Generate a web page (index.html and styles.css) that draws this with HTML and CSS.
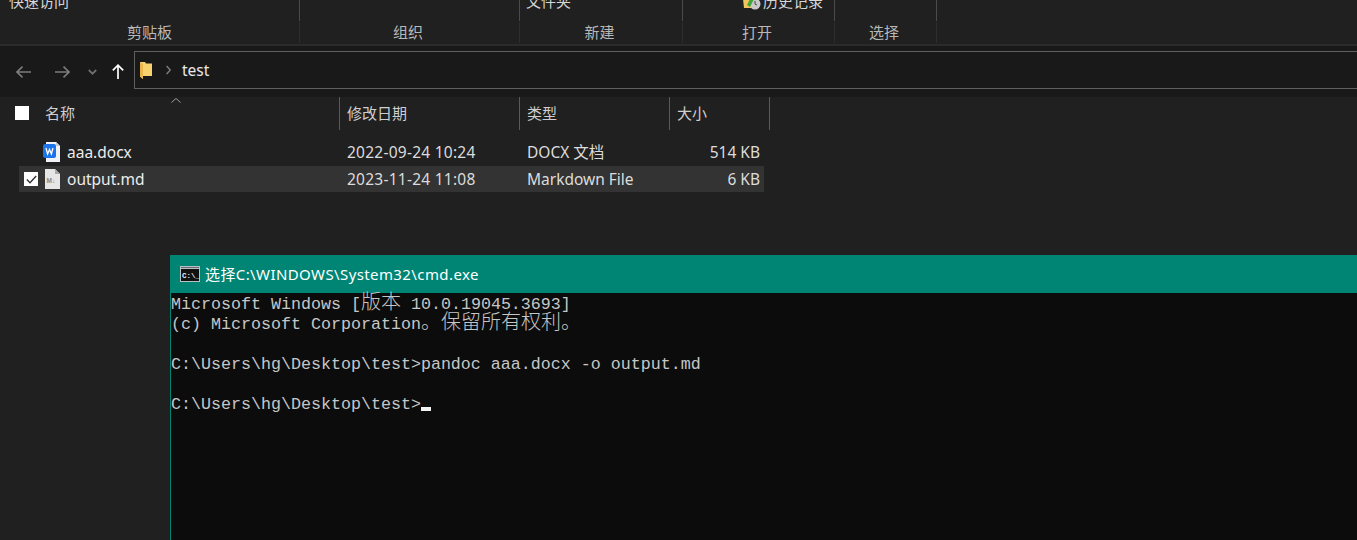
FILE: index.html
```html
<!DOCTYPE html>
<html lang="zh-CN">
<head>
<meta charset="utf-8">
<title>test</title>
<link rel="stylesheet" href="styles.css">
</head>
<body>
<div class="desktop">
  <div class="explorer">
    <section class="ribbon">
      <div class="ribbon-top">
        <div class="cell c1"><span class="clip-text first">快速访问</span></div>
        <div class="cell c2"></div>
        <div class="cell c3"><span class="clip-text third">文件夹</span></div>
        <div class="cell c4">
          <span class="clip-text hist">
            <svg class="hist-icon" width="18" height="11" viewBox="0 0 18 11"><path d="M0 0h8v9H1z" fill="#f2c55c"/><circle cx="12" cy="5" r="5.5" fill="#c9c9c9"/><path d="M4 6l3-6h4L7 8z" fill="#3fa63a"/><path d="M12 2v3l2 1" stroke="#444" fill="none"/></svg>历史记录</span>
        </div>
        <div class="cell c5"></div>
      </div>
      <div class="ribbon-labels">
        <div class="cell c1">剪贴板</div>
        <div class="cell c2">组织</div>
        <div class="cell c3">新建</div>
        <div class="cell c4">打开</div>
        <div class="cell c5">选择</div>
      </div>
    </section>

    <nav class="navbar">
      <svg class="nav-btn back" width="15" height="12" viewBox="0 0 15 12"><path d="M1 6H15M6.500 .7L1 6l5.500 5.300" fill="none" stroke="#7c7c7c" stroke-width="1.6"/></svg>
      <svg class="nav-btn forward" width="15" height="12" viewBox="0 0 15 12"><path d="M14 6H0M8.500 .7L14 6l-5.500 5.300" fill="none" stroke="#7c7c7c" stroke-width="1.6"/></svg>
      <svg class="nav-btn drop" width="9" height="6" viewBox="0 0 9 6"><path d="M.8 1l3.700 3.700L8.200 1" fill="none" stroke="#6e6e6e" stroke-width="1.8"/></svg>
      <svg class="nav-btn up" width="12" height="15" viewBox="0 0 12 15"><path d="M6 15V1.200M.8 6.300L6 1.200l5.200 5.100" fill="none" stroke="#fff" stroke-width="1.7"/></svg>
      <div class="address">
        <svg class="folder" width="12" height="17" viewBox="0 0 12 17"><path d="M0 0h5l1 1.500h6V14H3v3L0 14.500z" fill="#f8d26f"/><path d="M0 0l3 2V17L0 14.500z" fill="#e8b64a"/></svg>
        <svg class="crumb" width="5" height="10" viewBox="0 0 5 10"><path d="M.6 1l3.700 4-3.700 4" fill="none" stroke="#7a7a7a" stroke-width="1.500"/></svg>
        <span class="path">test</span>
      </div>
    </nav>

    <main class="files">
      <div class="file-head">
        <div class="head-col name-col">
          <span class="check empty"></span>
          <span>名称</span>
          <svg class="sort" width="10" height="5" viewBox="0 0 10 5"><path d="M.5 4.500L5 .5l4.500 4" fill="none" stroke="#9a9a9a"/></svg>
        </div>
        <div class="head-col date-col">修改日期</div>
        <div class="head-col type-col">类型</div>
        <div class="head-col size-col">大小</div>
      </div>

      <div class="rows">
        <div class="row">
          <div class="file-name">
            <span class="row-check"></span>
            <svg class="file-icon" width="18" height="20" viewBox="0 0 18 20"><path d="M3 0h10l4 4v16H3z" fill="#f1f3f6"/><path d="M13 0l4 4h-4z" fill="#c4cbd6"/><rect x="0" y="2" width="13" height="14" rx="2" fill="#1c74e8"/><path d="M3 6l1.600 6 1.900-4.500L8.400 12 10 6" fill="none" stroke="#fff" stroke-width="1.300"/></svg>
            <span>aaa.docx</span>
          </div>
          <div class="date">2022-09-24 10:24</div>
          <div>DOCX 文档</div>
          <div class="size">514 KB</div>
        </div>
        <div class="row selected">
          <div class="file-name">
            <span class="check ticked">
              <svg width="11" height="9" viewBox="0 0 11 9"><path d="M.8 4.500l3.200 3.300L10.200 1" fill="none" stroke="#333" stroke-width="1.400"/></svg>
            </span>
            <svg class="file-icon md" width="15" height="20" viewBox="0 0 15 20"><path d="M0 0h10l5 5v15H0z" fill="#e6e6e6"/><path d="M10 0l5 5h-5z" fill="#a9a9a9"/><text class="md-mark" x="1.500" y="14">M↓</text></svg>
            <span>output.md</span>
          </div>
          <div class="date">2023-11-24 11:08</div>
          <div>Markdown File</div>
          <div class="size">6 KB</div>
        </div>
      </div>
    </main>
  </div>

  <section class="terminal">
    <header class="term-title">
      <svg class="term-icon" width="20" height="16" viewBox="0 0 20 16"><rect width="20" height="16" fill="#b9c2c0"/><rect x="1" y="3" width="18" height="12" fill="#111"/><rect x="1" y="1" width="18" height="1" fill="#667"/><text class="term-icon-text" x="2" y="12">C:\_</text></svg>
      <span class="term-name">选择C:\WINDOWS\System32\cmd.exe</span>
    </header>
    <div class="term-body">
      <div class="line">Microsoft Windows [<span class="cjk">版本</span> 10.0.19045.3693]</div>
      <div class="line">(c) Microsoft Corporation<span class="cjk">。保留所有权利。</span></div>
      <div class="line"></div>
      <div class="line">C:\Users\hg\Desktop\test&gt;pandoc aaa.docx -o output.md</div>
      <div class="line"></div>
      <div class="line">C:\Users\hg\Desktop\test&gt;<span class="cursor"></span></div>
    </div>
  </section>
</div>
</body>
</html>
```

FILE: styles.css
```css
* { box-sizing: border-box; }

html, body {
  margin: 0;
  height: 100%;
  overflow: hidden;
  background: #202020;
}

body {
  font-family: "Noto Sans", "Noto Sans CJK SC", sans-serif;
  font-size: 15px;
}

.desktop {
  position: relative;
  width: 1357px;
  height: 540px;
  overflow: hidden;
}

.explorer {
  display: flex;
  flex-direction: column;
  height: 100%;
  background: #202020;
}

/* ribbon */
.ribbon {
  height: 46px;
  border-bottom: 2px solid #2b2b2b;
  color: #b9b9b9;
}

.ribbon-top,
.ribbon-labels {
  display: grid;
  grid-template-columns: 300px 220px 163px 152px 102px;
}

.ribbon-top { height: 21px; overflow: hidden; }

.ribbon-top .cell { border-right: 1px solid #4a4a4a; }

.clip-text {
  display: flex;
  align-items: center;
  height: 20px;
  margin-top: -9px;
  color: #d6d6d6;
  line-height: 20px;
}

.first { margin-left: 9px; }
.third { margin-left: 6px; }
.hist { margin-left: 60px; gap: 2px; }
.hist-icon { flex: none; margin-top: 7px; }

.ribbon-labels { height: 21px; margin-top: 1px; }

.ribbon-labels .cell {
  border-right: 1px solid #2e2e2e;
  line-height: 21px;
  text-align: center;
}

.ribbon-labels .c2,
.ribbon-labels .c3,
.ribbon-labels .c4,
.ribbon-labels .c5 { padding-right: 3px; }

/* navigation */
.navbar {
  display: flex;
  align-items: center;
  height: 51px;
  background: #191919;
}

.nav-btn { flex: none; }
.back { margin-left: 16px; }
.forward { margin-left: 24px; }
.drop { margin-left: 18px; }
.up { margin-left: 15px; }

.address {
  display: flex;
  align-items: center;
  align-self: flex-start;
  flex: 1;
  height: 38px;
  margin: 5px 0 0 10px;
  border: 1px solid #5f5f5f;
  border-right: 0;
  background: #191919;
}

.folder { margin-left: 5px; }
.crumb { margin-left: 14px; }

.path {
  margin-left: 11px;
  color: #e8e8e8;
  font-size: 15.5px;
}

/* file list */
.files {
  flex: 1;
  color: #d8d8d8;
}

.file-head {
  display: grid;
  grid-template-columns: 340px 180px 150px 100px;
  width: 770px;
  height: 33px;
  color: #cfcfcf;
  line-height: 20px;
}

.head-col {
  display: flex;
  align-items: center;
  padding-bottom: 2px;
  padding-left: 7px;
  border-right: 1px solid #5a5a5a;
}

.name-col {
  position: relative;
  gap: 16px;
  padding-left: 15px;
}

.sort {
  position: absolute;
  top: 1px;
  left: 171px;
}

.check {
  display: flex;
  align-items: center;
  justify-content: center;
  flex: none;
  width: 14px;
  height: 14px;
  background: #fff;
}

.rows {
  display: flex;
  flex-direction: column;
  gap: 1px;
  margin: 9px 0 0 19px;
  width: 745px;
}

.row {
  display: grid;
  grid-template-columns: 321px 180px 150px 94px;
  align-items: center;
  height: 26px;
  color: #dcdcdc;
  font-size: 15.5px;
  line-height: 20px;
}

.row > div + div { padding-left: 7px; }

.row .date { letter-spacing: .25px; }

.row .size {
  padding-right: 4px;
  text-align: right;
}

.selected { background: #333; }

.file-name {
  display: flex;
  align-items: center;
  color: #ececec;
}

.row-check {
  flex: none;
  width: 24px;
}

.file-name .check { margin-left: 5px; margin-right: 7px; }
.file-icon { flex: none; margin-right: 6px; }
.file-icon.md { margin-right: 7px; }

.md-mark {
  fill: #8a8a8a;
  font-family: "Liberation Sans", sans-serif;
  font-size: 6.500px;
  font-weight: 700;
}

/* terminal window */
.terminal {
  position: absolute;
  top: 255px;
  right: 0;
  bottom: 0;
  left: 170px;
  border-left: 1px solid #008575;
  background: #0c0c0c;
}

.term-title {
  display: flex;
  align-items: center;
  gap: 5px;
  height: 38px;
  margin-left: -1px;
  padding-left: 10px;
  background: #008575;
  color: #fff;
  font-size: 15px;
  line-height: 20px;
}

.term-name { letter-spacing: .4px; }

.term-icon { flex: none; }

.term-icon-text {
  fill: #eee;
  font-family: "Liberation Mono", monospace;
  font-size: 7.5px;
  font-weight: 700;
}

.term-body {
  padding-top: 2px;
  color: #c6c6c6;
  font-family: "Liberation Mono", "Noto Sans CJK SC", monospace;
  font-size: 16.667px;
}

.line {
  height: 20px;
  line-height: 20px;
  white-space: pre;
}

.cjk {
  font-family: "Noto Sans CJK SC", sans-serif;
  font-size: 20px;
  font-weight: 300;
  line-height: 0;
}

.cursor {
  display: inline-block;
  width: 10px;
  height: 4px;
  margin-bottom: -2px;
  background: #f2f2f2;
}
```
